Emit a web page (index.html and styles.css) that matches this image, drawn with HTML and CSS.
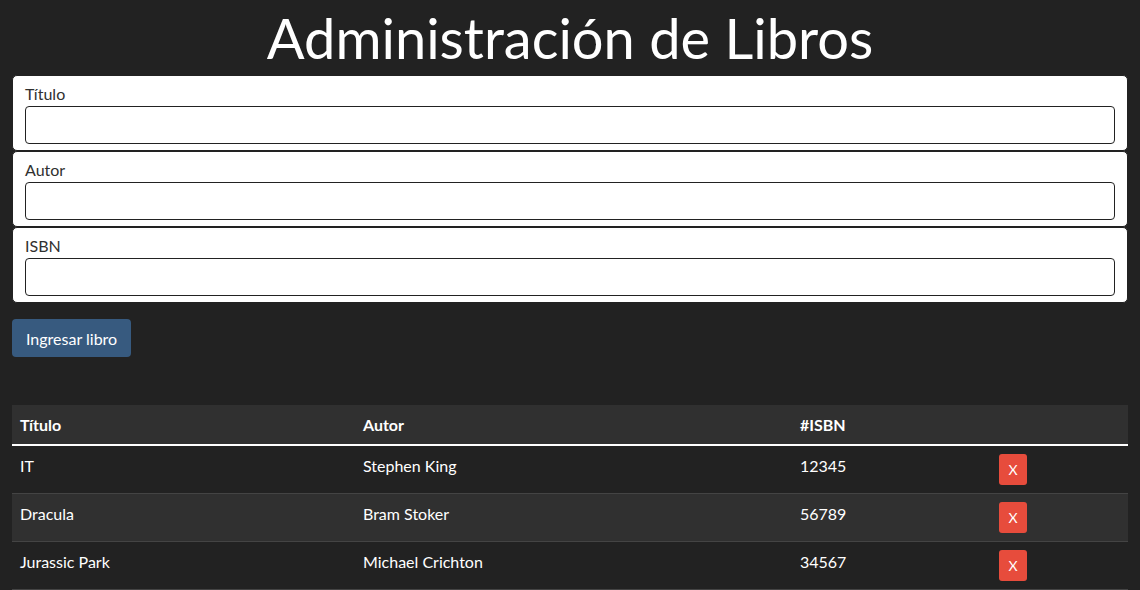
FILE: index.html
```html
<!DOCTYPE html>
<html lang="es">
<head>
<meta charset="utf-8">
<title>Administración de Libros</title>
<link rel="stylesheet" href="styles.css">
</head>
<body>
<div class="container">
  <h1 class="title">Administración de Libros</h1>
  <form class="book-form">
    <div class="card">
      <label class="label" for="titulo">Título</label>
      <input class="input" id="titulo" type="text">
    </div>
    <div class="card">
      <label class="label" for="autor">Autor</label>
      <input class="input" id="autor" type="text">
    </div>
    <div class="card">
      <label class="label" for="isbn">ISBN</label>
      <input class="input" id="isbn" type="text">
    </div>
    <button class="btn-primary" type="button">Ingresar libro</button>
  </form>
  <table class="books">
    <thead>
      <tr><th class="c1">Título</th><th class="c2">Autor</th><th class="c3">#ISBN</th><th class="c4"></th></tr>
    </thead>
    <tbody>
      <tr><td>IT</td><td>Stephen King</td><td>12345</td><td><button class="btn-del" type="button">X</button></td></tr>
      <tr><td>Dracula</td><td>Bram Stoker</td><td>56789</td><td><button class="btn-del" type="button">X</button></td></tr>
      <tr><td>Jurassic Park</td><td>Michael Crichton</td><td>34567</td><td><button class="btn-del" type="button">X</button></td></tr>
    </tbody>
  </table>
</div>
</body>
</html>
```
FILE: styles.css
```css
* { box-sizing: border-box; }
html, body {
  margin: 0;
  padding: 0;
  background: #222222;
  color: #ffffff;
  font-family: Lato, "Noto Sans", sans-serif;
  font-size: 16px;
  line-height: 1.5;
}
.container {
  padding: 0 12px;
}
.title {
  margin: 0;
  height: 75px;
  text-align: center;
  font-size: 56px;
  font-weight: 400;
  line-height: 75px;
  color: #ffffff;
}
.book-form {
  display: flex;
  flex-direction: column;
  align-items: flex-start;
}
.card {
  width: 100%;
  background: #ffffff;
  border: 1px solid #222222;
  border-radius: 5px;
  padding: 6px 12px;
  display: flex;
  flex-direction: column;
}
.label {
  color: #303030;
  font-size: 16px;
  line-height: 24px;
  height: 24px;
}
.input {
  height: 38px;
  width: 100%;
  border: 1px solid #222222;
  border-radius: 4px;
  background: #ffffff;
  font: inherit;
  padding: 6px 12px;
}
.btn-primary {
  margin-top: 16px;
  height: 38px;
  padding: 0 14px;
  background: #375a7f;
  color: #ffffff;
  border: none;
  border-radius: 4px;
  font-family: Lato, "Noto Sans", sans-serif;
  font-size: 16px;
}
.books {
  margin-top: 48px;
  width: 100%;
  border-collapse: collapse;
  table-layout: fixed;
}
.books th, .books td {
  text-align: left;
  vertical-align: top;
  padding: 8px;
  font-size: 16px;
  line-height: 24px;
}
.books thead tr {
  background: #303030;
}
.books th {
  font-weight: 700;
  border-bottom: 2px solid #ffffff;
  padding-top: 8px;
  padding-bottom: 7px;
}
.books td {
  border-bottom: 1px solid #444444;
  padding-top: 8px;
  padding-bottom: 8px;
}
.books tbody tr:nth-child(even) {
  background: #303030;
}
.c1 { width: 343px; }
.c2 { width: 437px; }
.c3 { width: 199px; }
.c4 { width: 137px; }
.btn-del {
  width: 28px;
  height: 31px;
  padding: 0;
  border: none;
  border-radius: 3px;
  background: #e74c3c;
  color: #ffffff;
  font-family: Lato, "Noto Sans", sans-serif;
  font-size: 14px;
  display: block;
}
```
